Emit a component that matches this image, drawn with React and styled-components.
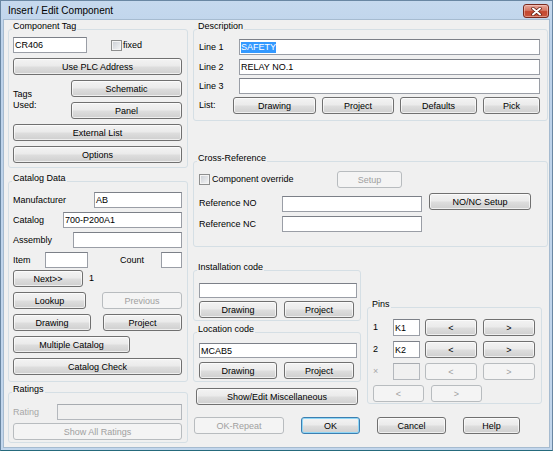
import React from 'react';
import styled, { createGlobalStyle, css } from 'styled-components';

const Global = createGlobalStyle`
  html, body { margin: 0; padding: 0; }
  body {
    width: 553px; height: 451px; overflow: hidden;
    background: #f0f0f0;
    font-family: "Liberation Sans", Arial, sans-serif;
  }
  *, *::before, *::after { box-sizing: border-box; }
`;

const Window = styled.div`
  width: 553px;
  height: 451px;
  display: flex;
  flex-direction: column;
  background: linear-gradient(#c6d9ee, #bcd2ea 40px, #c2d6ec);
  border: 1px solid #6a87a3;
  border-bottom-color: #256a7c;
  padding: 0 3px 3px 3px;
`;

const TitleBar = styled.div`
  height: 19px;
  flex-shrink: 0;
  display: flex;
  align-items: center;
  justify-content: space-between;
  padding-left: 4px;
`;

const Title = styled.span`
  font-size: 10px;
  color: #000;
  white-space: nowrap;
`;

const CloseButton = styled.div`
  align-self: flex-start;
  margin-top: 3px;
  width: 26px;
  height: 14px;
  border: 1px solid #7a2a1f;
  border-radius: 3px;
  background: linear-gradient(#e7a89c 0%, #d57865 45%, #c4472f 55%, #c9553c 100%);
  box-shadow: inset 0 0 0 1px rgba(255, 220, 210, 0.45);
  display: flex;
  align-items: center;
  justify-content: center;
`;

const Client = styled.div`
  flex: 1;
  background: #f0f0f0;
  box-shadow: 0 0 0 1px #a6bbd0;
  display: flex;
  gap: 5px;
  padding: 9px 1px 0 4px;
`;

const Column = styled.div`
  width: ${(p) => p.$w}px;
  flex-shrink: 0;
  display: flex;
  flex-direction: column;
`;

const Group = styled.div`
  position: relative;
  flex-shrink: 0;
  width: ${(p) => (p.$w ? `${p.$w}px` : 'auto')};
  height: ${(p) => p.$h}px;
  margin-top: ${(p) => p.$mt || 0}px;
  padding: ${(p) => p.$pad};
  border: 1px solid #d5dfe5;
  border-radius: 3px;
  display: flex;
  flex-direction: column;
`;

const Legend = styled.span`
  position: absolute;
  top: -9px;
  left: 3px;
  padding: 0 1px;
  background: #f0f0f0;
  font-size: 9px;
  line-height: 11px;
  color: #000;
  white-space: nowrap;
`;

const Stack = styled.div`
  display: flex;
  flex-direction: column;
  gap: ${(p) => p.$gap || 0}px;
  margin-top: ${(p) => p.$mt || 0}px;
`;

const Row = styled.div`
  display: flex;
  align-items: ${(p) => p.$align || 'center'};
  justify-content: ${(p) => p.$justify || 'flex-start'};
  height: ${(p) => p.$h}px;
  gap: ${(p) => p.$gap || 0}px;
  margin-top: ${(p) => p.$mt || 0}px;
  margin-left: ${(p) => p.$ml || 0}px;
  flex-shrink: 0;
`;

const Label = styled.span`
  font-size: 9px;
  line-height: 11px;
  color: ${(p) => (p.$disabled ? '#a7a7a7' : '#000')};
  width: ${(p) => (p.$w ? `${p.$w}px` : 'auto')};
  margin-left: ${(p) => p.$ml || 0}px;
  margin-top: ${(p) => p.$mt || 0}px;
  flex-shrink: 0;
  white-space: nowrap;
`;

const TwoLineLabel = styled.span`
  font-size: 9px;
  line-height: 11px;
  color: #000;
  width: ${(p) => p.$w}px;
  flex-shrink: 0;
`;

const TextBox = styled.div`
  width: ${(p) => p.$w}px;
  height: ${(p) => p.$h || 16}px;
  margin-top: ${(p) => p.$mt || 0}px;
  flex-shrink: 0;
  display: flex;
  align-items: center;
  padding-left: 1px;
  border: 1px solid ${(p) => (p.$disabled ? '#b4b8bd' : '#9a9ea6')};
  border-top-color: ${(p) => (p.$disabled ? '#a7abb0' : '#7c8088')};
  background: ${(p) => (p.$disabled ? '#f0f0f0' : '#fff')};
  font-size: 9px;
  color: #000;
  white-space: nowrap;
  overflow: hidden;
`;

const Selected = styled.span`
  display: inline-block;
  line-height: 11px;
  background: #3399ff;
  color: #fff;
`;

const Button = styled.button`
  width: ${(p) => (p.$w ? `${p.$w}px` : '100%')};
  height: 17px;
  flex-shrink: 0;
  margin: 0;
  margin-left: ${(p) => p.$ml || 0}px;
  margin-top: ${(p) => p.$mt || 0}px;
  padding: 0;
  font-family: "Liberation Sans", Arial, sans-serif;
  font-size: 9px;
  color: #000;
  white-space: nowrap;
  border: 1px solid #707070;
  border-radius: 3px;
  background: linear-gradient(#f3f3f3 0%, #ebebeb 45%, #dddddd 55%, #cfcfcf 100%);
  box-shadow: inset 0 0 0 1px rgba(255, 255, 255, 0.65);
  display: flex;
  align-items: center;
  justify-content: center;
  ${(p) =>
    p.disabled &&
    css`
      border-color: #b8bcbf;
      background: #f4f4f4;
      color: #a0a0a0;
      box-shadow: none;
    `}
  ${(p) =>
    p.$default &&
    css`
      border-color: #3c7fb1;
      box-shadow: inset 0 0 0 1px #8fd6f6;
    `}
`;

const CheckField = styled.div`
  display: flex;
  align-items: center;
  width: ${(p) => (p.$w ? `${p.$w}px` : 'auto')};
  margin-left: ${(p) => p.$ml || 0}px;
  flex-shrink: 0;
`;

const CheckBox = styled.span`
  width: 11px;
  height: 11px;
  flex-shrink: 0;
  border: 1px solid #8e8f8f;
  background: linear-gradient(135deg, #c9cdd3 0%, #e2e4e7 55%, #f7f7f7 100%);
  box-shadow: inset 0 0 0 1px #f4f4f4;
`;

const BottomRow = styled.div`
  display: flex;
  gap: 17px;
  margin-top: 12px;
  margin-left: 1px;
`;

const MiddleRow = styled.div`
  display: flex;
  gap: 6px;
  margin-top: 23px;
  align-items: flex-start;
`;

const CloseIcon = () => (
  <svg width="11" height="9" viewBox="0 0 11 9">
    <path d="M2 1.5 L9 7.5 M9 1.5 L2 7.5" stroke="#5a1a10" strokeWidth="3.4" strokeLinecap="round" />
    <path d="M2 1.5 L9 7.5 M9 1.5 L2 7.5" stroke="#fff" strokeWidth="2" strokeLinecap="round" />
  </svg>
);

const PinRow = ({ num, value, disabled }) => (
  <Row $h={17}>
    <Label $w={20} $disabled={disabled}>{num}</Label>
    <TextBox $w={27} $h={17} $disabled={disabled}>{value}</TextBox>
    <Button $w={52} $ml={5} disabled={disabled}>&lt;</Button>
    <Button $w={52} $ml={6} disabled={disabled}>&gt;</Button>
  </Row>
);

export default function App() {
  return (
    <>
      <Global />
      <Window>
        <TitleBar>
          <Title>Insert / Edit Component</Title>
          <CloseButton>
            <CloseIcon />
          </CloseButton>
        </TitleBar>
        <Client>
          <Column $w={180}>
            <Group $h={139} $pad="7px 5px 0 4px">
              <Legend>Component Tag</Legend>
              <Stack $gap={5}>
                <Row $h={16}>
                  <TextBox $w={74}>CR406</TextBox>
                  <CheckField $ml={24}>
                    <CheckBox />
                    <Label $ml={1}>fixed</Label>
                  </CheckField>
                </Row>
                <Button>Use PLC Address</Button>
                <Row $h={39}>
                  <TwoLineLabel $w={58}>
                    Tags
                    <br />
                    Used:
                  </TwoLineLabel>
                  <Stack $gap={5}>
                    <Button $w={111}>Schematic</Button>
                    <Button $w={111}>Panel</Button>
                  </Stack>
                </Row>
                <Button>External List</Button>
                <Button>Options</Button>
              </Stack>
            </Group>

            <Group $mt={13} $h={201} $pad="10px 5px 0 4px">
              <Legend>Catalog Data</Legend>
              <Stack $gap={4}>
                <Row $h={16} $justify="space-between">
                  <Label>Manufacturer</Label>
                  <TextBox $w={88}>AB</TextBox>
                </Row>
                <Row $h={16} $justify="space-between">
                  <Label>Catalog</Label>
                  <TextBox $w={119}>700-P200A1</TextBox>
                </Row>
                <Row $h={16} $justify="space-between">
                  <Label>Assembly</Label>
                  <TextBox $w={109} />
                </Row>
                <Row $h={16}>
                  <Label $w={32}>Item</Label>
                  <TextBox $w={43} />
                  <Label $w={41} $ml={32}>Count</Label>
                  <TextBox $w={21} />
                </Row>
              </Stack>
              <Stack $gap={5} $mt={2}>
                <Row $h={17}>
                  <Button $w={70}>Next&gt;&gt;</Button>
                  <Label $ml={6}>1</Label>
                </Row>
                <Row $h={17} $justify="space-between">
                  <Button $w={73}>Lookup</Button>
                  <Button $w={80} disabled>Previous</Button>
                </Row>
                <Row $h={17} $justify="space-between">
                  <Button $w={78}>Drawing</Button>
                  <Button $w={79}>Project</Button>
                </Row>
                <Button $w={117}>Multiple Catalog</Button>
                <Button>Catalog Check</Button>
              </Stack>
            </Group>

            <Group $mt={10} $h={51} $pad="11px 5px 0 4px">
              <Legend>Ratings</Legend>
              <Row $h={16} $justify="space-between">
                <Label $disabled>Rating</Label>
                <TextBox $w={125} $disabled />
              </Row>
              <Button disabled $mt={3}>Show All Ratings</Button>
            </Group>
          </Column>

          <Column $w={355}>
            <Group $h={92} $pad="9px 7px 0 5px">
              <Legend>Description</Legend>
              <Row $h={16}>
                <Label $w={40}>Line 1</Label>
                <TextBox $w={301}>
                  <Selected>SAFETY</Selected>
                </TextBox>
              </Row>
              <Row $h={16} $mt={4}>
                <Label $w={40}>Line 2</Label>
                <TextBox $w={301}>RELAY NO.1</TextBox>
              </Row>
              <Row $h={16} $mt={3}>
                <Label $w={40}>Line 3</Label>
                <TextBox $w={301} />
              </Row>
              <Row $h={17} $mt={3} $gap={6}>
                <Label $w={28}>List:</Label>
                <Button $w={83}>Drawing</Button>
                <Button $w={72}>Project</Button>
                <Button $w={77}>Defaults</Button>
                <Button $w={57}>Pick</Button>
              </Row>
            </Group>

            <Group $mt={40} $h={86} $pad="9px 7px 0 5px">
              <Legend>Cross-Reference</Legend>
              <Row $h={17}>
                <CheckField $w={138}>
                  <CheckBox />
                  <Label $ml={2}>Component override</Label>
                </CheckField>
                <Button $w={65} disabled>Setup</Button>
              </Row>
              <Row $h={19} $mt={5} $align="flex-start">
                <Label $w={83} $mt={5}>Reference NO</Label>
                <TextBox $w={140} $mt={3} />
                <Button $w={102} $ml={7}>NO/NC Setup</Button>
              </Row>
              <Row $h={16} $mt={4}>
                <Label $w={83}>Reference NC</Label>
                <TextBox $w={140} />
              </Row>
            </Group>

            <MiddleRow>
              <Column $w={168}>
                <Group $h={51} $pad="12px 3px 0 5px">
                  <Legend>Installation code</Legend>
                  <TextBox $w={158} $h={15} />
                  <Row $h={17} $mt={3} $gap={7}>
                    <Button $w={78}>Drawing</Button>
                    <Button $w={70}>Project</Button>
                  </Row>
                </Group>
                <Group $mt={11} $h={50} $pad="10px 3px 0 5px">
                  <Legend>Location code</Legend>
                  <TextBox $w={158} $h={15}>MCAB5</TextBox>
                  <Row $h={17} $mt={4} $gap={7}>
                    <Button $w={78}>Drawing</Button>
                    <Button $w={70}>Project</Button>
                  </Row>
                </Group>
                <Button $w={162} $ml={3} $mt={6}>Show/Edit Miscellaneous</Button>
              </Column>

              <Group $mt={37} $w={175} $h={97} $pad="11px 5px 0 5px">
                <Legend>Pins</Legend>
                <Stack $gap={5}>
                  <PinRow num="1" value="K1" />
                  <PinRow num="2" value="K2" />
                  <PinRow num="×" value="" disabled />
                  <Row $h={17}>
                    <Button $w={51} disabled>&lt;</Button>
                    <Button $w={51} $ml={7} disabled>&gt;</Button>
                  </Row>
                </Stack>
              </Group>
            </MiddleRow>

            <BottomRow>
              <Button $w={90} disabled>OK-Repeat</Button>
              <Button $w={59} $default>OK</Button>
              <Button $w={69}>Cancel</Button>
              <Button $w={57}>Help</Button>
            </BottomRow>
          </Column>
        </Client>
      </Window>
    </>
  );
}
